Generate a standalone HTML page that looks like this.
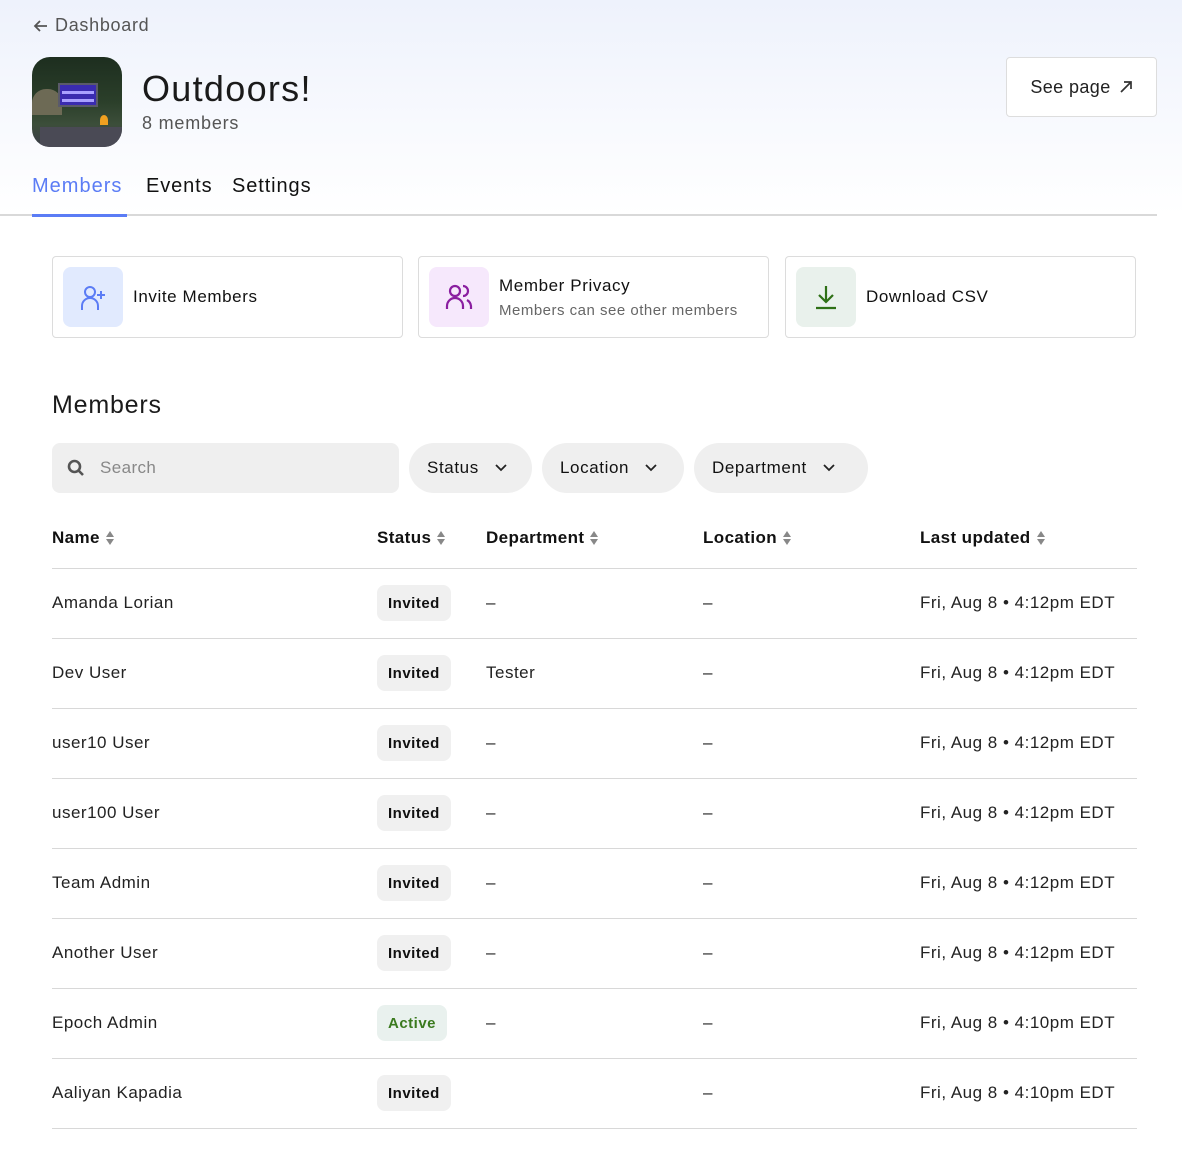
<!DOCTYPE html>
<html><head><meta charset="utf-8"><style>
*{box-sizing:border-box;margin:0;padding:0}
body{width:1182px;height:1156px;background:#fff;font-family:"Liberation Sans",sans-serif;color:#111;position:relative;overflow:hidden;letter-spacing:0.4px}
.hdr{position:absolute;left:0;top:0;width:1182px;height:215px;background:linear-gradient(#eef2fc,#fff)}
.abs{position:absolute}
.card{position:absolute;top:256px;height:82px;width:351px;border:1px solid #dcdcdc;border-radius:4px;background:#fff}
.ib{position:absolute;left:10px;top:10px;width:60px;height:60px;border-radius:8px;display:flex;align-items:center;justify-content:center}
.ct{position:absolute;left:80px;font-size:17px;font-weight:500;letter-spacing:0.6px}
.pill{position:absolute;top:443px;height:50px;border-radius:25px;background:#efefef;font-size:17px;display:flex;align-items:center;padding-left:18px;letter-spacing:0.6px}
.th{position:absolute;top:528px;font-size:17px;font-weight:bold;display:flex;align-items:center;gap:6px}
.sort{display:inline-block;width:8px;height:18px;position:relative}
.sort:before{content:"";position:absolute;left:0;top:2px;border:4px solid transparent;border-bottom:6px solid #888;border-top:0}
.sort:after{content:"";position:absolute;left:0;top:10px;border:4px solid transparent;border-top:6px solid #888;border-bottom:0}
.line{position:absolute;left:52px;width:1085px;height:1px;background:#d8d8d8}
.cell{position:absolute;font-size:17px;color:#222;letter-spacing:0.5px}
.badge{position:absolute;left:377px;height:36px;border-radius:8px;background:#f0f0f0;font-size:15px;font-weight:bold;display:flex;align-items:center;padding:0 11px;letter-spacing:0.5px}
</style></head><body>
<div class="hdr"></div>
<div class="abs" style="left:33px;top:15px;font-size:18px;color:#555;display:flex;align-items:center;gap:6px;letter-spacing:0.7px">
<svg width="16" height="16" viewBox="0 0 16 16" fill="none" stroke="#555" stroke-width="1.8"><path d="M14 8H2M7 3L2 8l5 5"/></svg>Dashboard</div>
<div class="abs" style="left:32px;top:57px;width:90px;height:90px;border-radius:18px;overflow:hidden;background:linear-gradient(#1d2e1f 0%,#2b3f2a 50%,#3c4e3a 75%,#3a3c48 100%)">
<div class="abs" style="left:0;top:32px;width:30px;height:26px;background:#6d6a55;border-radius:14px 14px 0 0"></div>
<div class="abs" style="left:26px;top:26px;width:40px;height:24px;background:#3a2bb0;border:2px solid #5a5a6a"></div>
<div class="abs" style="left:30px;top:34px;width:32px;height:3px;background:#a9a0ff"></div>
<div class="abs" style="left:30px;top:42px;width:32px;height:3px;background:#a9a0ff"></div>
<div class="abs" style="left:68px;top:58px;width:8px;height:10px;background:#f0a020;border-radius:50% 50% 0 0"></div>
<div class="abs" style="left:8px;top:70px;width:82px;height:20px;background:#4a4a55"></div>
</div>
<div class="abs" style="left:142px;top:68px;font-size:36px;font-weight:500;color:#1a1a1a;letter-spacing:1.3px">Outdoors!</div>
<div class="abs" style="left:142px;top:113px;font-size:18px;color:#555;letter-spacing:0.8px">8 members</div>
<div class="abs" style="left:1006px;top:57px;width:151px;height:60px;border:1px solid #ddd;border-radius:4px;background:#fff;display:flex;align-items:center;justify-content:center;gap:8px;font-size:18px;color:#222">See page
<svg width="14" height="14" viewBox="0 0 14 14" fill="none" stroke="#333" stroke-width="1.7"><path d="M2 12L12 2M5 2h7v7"/></svg></div>
<div class="abs" style="left:32px;top:175px;font-size:20px;color:#5b7cf5;font-weight:500;letter-spacing:1px">Members</div>
<div class="abs" style="left:146px;top:175px;font-size:20px;font-weight:500;letter-spacing:0.9px">Events</div>
<div class="abs" style="left:232px;top:175px;font-size:20px;font-weight:500;letter-spacing:0.9px">Settings</div>
<div class="abs" style="left:0;top:214px;width:1157px;height:2px;background:#d9d9d9"></div>
<div class="abs" style="left:32px;top:214px;width:95px;height:3px;background:#5b7cf5"></div>

<div class="card" style="left:52px"><div class="ib" style="background:#e1eafe">
<svg width="30" height="30" viewBox="0 0 30 30" fill="none" stroke="#5b7cf5" stroke-width="2"><circle cx="12" cy="10" r="5"/><path d="M4 28v-4a8 8 0 0 1 16 0v4M23 9v8M19 13h8"/></svg></div>
<div class="ct" style="top:30px">Invite Members</div></div>
<div class="card" style="left:418px"><div class="ib" style="background:#f6e8fc">
<svg width="30" height="30" viewBox="0 0 30 30" fill="none" stroke="#8a1ea0" stroke-width="2.2"><circle cx="11" cy="9" r="5"/><path d="M3 27v-3a8 8 0 0 1 16 0v3M19 4a5 5 0 0 1 0 10M23 18a8 8 0 0 1 4 6v3"/></svg></div>
<div class="ct" style="top:19px">Member Privacy</div>
<div class="abs" style="left:80px;top:45px;font-size:15px;color:#666;letter-spacing:0.5px">Members can see other members</div></div>
<div class="card" style="left:785px"><div class="ib" style="background:#e9f1ec">
<svg width="30" height="30" viewBox="0 0 30 30" fill="none" stroke="#2e7016" stroke-width="2.2"><path d="M15 4v16M8 13l7 7 7-7M5 26h20"/></svg></div>
<div class="ct" style="top:30px">Download CSV</div></div>

<div class="abs" style="left:52px;top:391px;font-size:25px;font-weight:500;color:#1a1a1a;letter-spacing:0.8px">Members</div>
<div class="abs" style="left:52px;top:443px;width:347px;height:50px;border-radius:8px;background:#efefef;display:flex;align-items:center;padding-left:15px;gap:15px;font-size:17px;color:#888">
<svg width="18" height="18" viewBox="0 0 18 18" fill="none" stroke="#555" stroke-width="2.6"><circle cx="7.5" cy="7.5" r="5.5"/><path d="M11.5 11.5L16 16"/></svg>Search</div>
<div class="pill" style="left:409px;width:123px">Status<svg style="margin-left:16px" width="12" height="8" viewBox="0 0 12 8" fill="none" stroke="#222" stroke-width="1.8"><path d="M1 1l5 5 5-5"/></svg></div>
<div class="pill" style="left:542px;width:142px">Location<svg style="margin-left:16px" width="12" height="8" viewBox="0 0 12 8" fill="none" stroke="#222" stroke-width="1.8"><path d="M1 1l5 5 5-5"/></svg></div>
<div class="pill" style="left:694px;width:174px">Department<svg style="margin-left:16px" width="12" height="8" viewBox="0 0 12 8" fill="none" stroke="#222" stroke-width="1.8"><path d="M1 1l5 5 5-5"/></svg></div>

<div class="th" style="left:52px">Name<span class="sort"></span></div>
<div class="th" style="left:377px">Status<span class="sort"></span></div>
<div class="th" style="left:486px">Department<span class="sort"></span></div>
<div class="th" style="left:703px">Location<span class="sort"></span></div>
<div class="th" style="left:920px">Last updated<span class="sort"></span></div>
<div class="line" style="top:568px"></div>

<div class="cell" style="left:52px;top:593px">Amanda Lorian</div><div class="badge" style="top:585px">Invited</div><div class="cell" style="left:486px;top:593px">–</div><div class="cell" style="left:703px;top:593px">–</div><div class="cell" style="left:920px;top:593px">Fri, Aug 8 • 4:12pm EDT</div><div class="line" style="top:638px"></div>
<div class="cell" style="left:52px;top:663px">Dev User</div><div class="badge" style="top:655px">Invited</div><div class="cell" style="left:486px;top:663px">Tester</div><div class="cell" style="left:703px;top:663px">–</div><div class="cell" style="left:920px;top:663px">Fri, Aug 8 • 4:12pm EDT</div><div class="line" style="top:708px"></div>
<div class="cell" style="left:52px;top:733px">user10 User</div><div class="badge" style="top:725px">Invited</div><div class="cell" style="left:486px;top:733px">–</div><div class="cell" style="left:703px;top:733px">–</div><div class="cell" style="left:920px;top:733px">Fri, Aug 8 • 4:12pm EDT</div><div class="line" style="top:778px"></div>
<div class="cell" style="left:52px;top:803px">user100 User</div><div class="badge" style="top:795px">Invited</div><div class="cell" style="left:486px;top:803px">–</div><div class="cell" style="left:703px;top:803px">–</div><div class="cell" style="left:920px;top:803px">Fri, Aug 8 • 4:12pm EDT</div><div class="line" style="top:848px"></div>
<div class="cell" style="left:52px;top:873px">Team Admin</div><div class="badge" style="top:865px">Invited</div><div class="cell" style="left:486px;top:873px">–</div><div class="cell" style="left:703px;top:873px">–</div><div class="cell" style="left:920px;top:873px">Fri, Aug 8 • 4:12pm EDT</div><div class="line" style="top:918px"></div>
<div class="cell" style="left:52px;top:943px">Another User</div><div class="badge" style="top:935px">Invited</div><div class="cell" style="left:486px;top:943px">–</div><div class="cell" style="left:703px;top:943px">–</div><div class="cell" style="left:920px;top:943px">Fri, Aug 8 • 4:12pm EDT</div><div class="line" style="top:988px"></div>
<div class="cell" style="left:52px;top:1013px">Epoch Admin</div><div class="badge" style="top:1005px;background:#e9f1ee;color:#3a7a1e">Active</div><div class="cell" style="left:486px;top:1013px">–</div><div class="cell" style="left:703px;top:1013px">–</div><div class="cell" style="left:920px;top:1013px">Fri, Aug 8 • 4:10pm EDT</div><div class="line" style="top:1058px"></div>
<div class="cell" style="left:52px;top:1083px">Aaliyan Kapadia</div><div class="badge" style="top:1075px">Invited</div><div class="cell" style="left:703px;top:1083px">–</div><div class="cell" style="left:920px;top:1083px">Fri, Aug 8 • 4:10pm EDT</div><div class="line" style="top:1128px"></div>
</body></html>
